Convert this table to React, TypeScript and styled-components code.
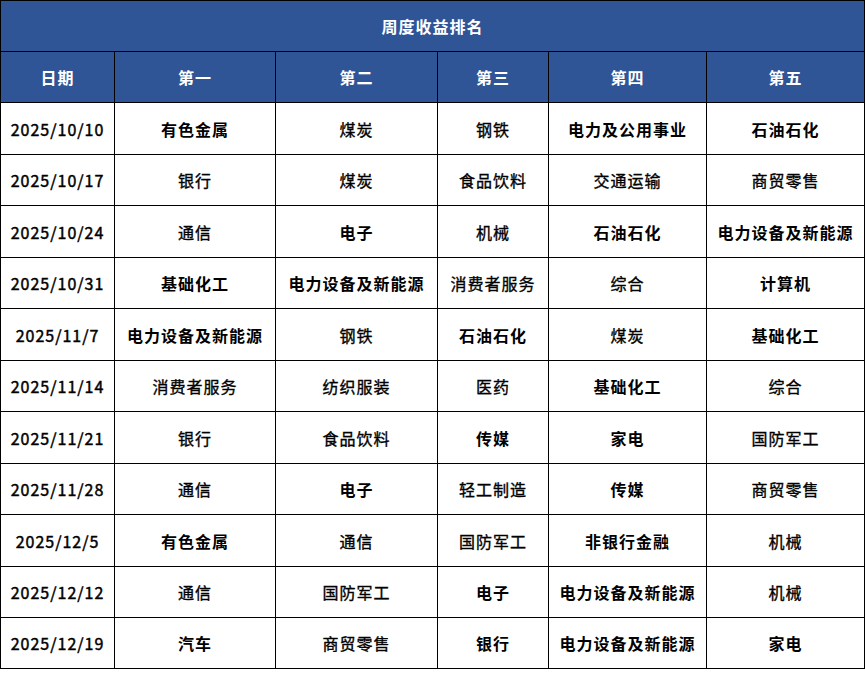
import React from 'react';
import styled, { createGlobalStyle } from 'styled-components';

const GlobalStyle = createGlobalStyle`
  html, body {
    margin: 0;
    padding: 0;
    background: #ffffff;
  }
`;

const HEADERS = ['日期', '第一', '第二', '第三', '第四', '第五'];

// each cell: [text, bold]
type Cell = [string, boolean];

const ROWS: { date: string; cells: Cell[] }[] = [
  { date: '2025/10/10', cells: [['有色金属', true], ['煤炭', false], ['钢铁', false], ['电力及公用事业', true], ['石油石化', true]] },
  { date: '2025/10/17', cells: [['银行', false], ['煤炭', false], ['食品饮料', false], ['交通运输', false], ['商贸零售', false]] },
  { date: '2025/10/24', cells: [['通信', false], ['电子', true], ['机械', false], ['石油石化', true], ['电力设备及新能源', true]] },
  { date: '2025/10/31', cells: [['基础化工', true], ['电力设备及新能源', true], ['消费者服务', false], ['综合', false], ['计算机', true]] },
  { date: '2025/11/7', cells: [['电力设备及新能源', true], ['钢铁', false], ['石油石化', true], ['煤炭', false], ['基础化工', true]] },
  { date: '2025/11/14', cells: [['消费者服务', false], ['纺织服装', false], ['医药', false], ['基础化工', true], ['综合', false]] },
  { date: '2025/11/21', cells: [['银行', false], ['食品饮料', false], ['传媒', true], ['家电', true], ['国防军工', false]] },
  { date: '2025/11/28', cells: [['通信', false], ['电子', true], ['轻工制造', false], ['传媒', true], ['商贸零售', false]] },
  { date: '2025/12/5', cells: [['有色金属', true], ['通信', false], ['国防军工', false], ['非银行金融', true], ['机械', false]] },
  { date: '2025/12/12', cells: [['通信', false], ['国防军工', false], ['电子', true], ['电力设备及新能源', true], ['机械', false]] },
  { date: '2025/12/19', cells: [['汽车', true], ['商贸零售', false], ['银行', true], ['电力设备及新能源', true], ['家电', true]] },
];

const Table = styled.div`
  display: grid;
  grid-template-columns: 114px 161px 162px 111px 158px 158px;
  grid-template-rows: 51px 51px 52px 51px 52px 51px 52px 51px 52px 51px 52px 51px 51px;
  width: 865px;
  box-sizing: border-box;
  border-left: 1px solid #000;
  border-top: 1px solid #000;
  font-family: 'Noto Sans CJK SC', 'Noto Sans', sans-serif;
  font-size: 16px;
  letter-spacing: 1px;
  color: #000;
`;

const Cell = styled.div<{ $bold?: boolean }>`
  display: flex;
  align-items: center;
  justify-content: center;
  box-sizing: border-box;
  border-right: 1px solid #000;
  border-bottom: 1px solid #000;
  font-weight: ${(p) => (p.$bold ? 700 : 400)};
  -webkit-text-stroke: ${(p) => (p.$bold ? '0' : '0.35px #000')};
  white-space: nowrap;
`;

const Title = styled(Cell)`
  grid-column: 1 / -1;
  background: #2f5597;
  color: #fff;
  font-weight: 700;
  -webkit-text-stroke: 0;
`;

const HeadCell = styled(Cell)`
  background: #2f5597;
  color: #fff;
  font-weight: 700;
  -webkit-text-stroke: 0;
`;

const DateCell = styled(Cell)`
  font-weight: 400;
  -webkit-text-stroke: 0.45px #000;
`;

const App: React.FC = () => {
  return (
    <>
      <GlobalStyle />
      <Table>
        <Title>周度收益排名</Title>
        {HEADERS.map((h) => (
          <HeadCell key={h}>{h}</HeadCell>
        ))}
        {ROWS.map((row) => (
          <React.Fragment key={row.date}>
            <DateCell>{row.date}</DateCell>
            {row.cells.map(([text, bold], i) => (
              <Cell key={i} $bold={bold}>
                {text}
              </Cell>
            ))}
          </React.Fragment>
        ))}
      </Table>
    </>
  );
};

export default App;
